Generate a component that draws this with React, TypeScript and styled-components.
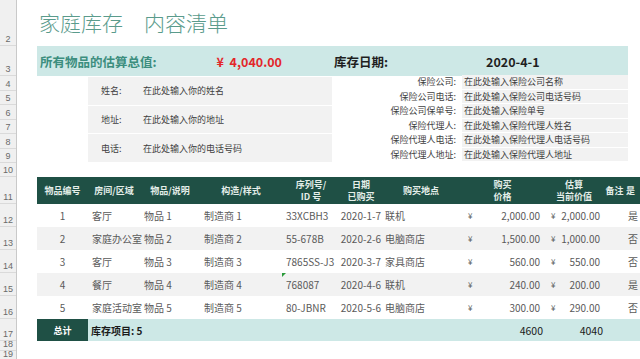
import React from 'react';
import styled, { createGlobalStyle } from 'styled-components';

const Global = createGlobalStyle`
  html, body { margin: 0; padding: 0; background: #ffffff; }
  body { width: 640px; height: 359px; overflow: hidden; font-family: "Noto Sans CJK SC", "Noto Sans", sans-serif; }
  * { box-sizing: border-box; }
`;

const DARK = '#1f5045';
const TEAL = '#cde8e6';
const GREY = '#f2f2f2';
const TEXT = '#5a5a5a';

const Sheet = styled.div`
  display: flex;
  width: 640px;
  height: 359px;
  overflow: hidden;
`;

const RowHeaders = styled.div`
  display: flex;
  flex-direction: column;
  width: 17px;
  flex: none;
  background: #f0f0f0;
  border-right: 1px solid #c9c9c9;
`;

const RowNum = styled.div<{ $h: number }>`
  height: ${(p) => p.$h}px;
  flex: none;
  display: flex;
  align-items: flex-end;
  justify-content: center;
  font-family: "Liberation Sans", sans-serif;
  font-size: 9px;
  line-height: 10px;
  color: #6a6a6a;
  border-bottom: 1px solid #dadada;
  padding-bottom: 1px;
`;

const Main = styled.div`
  flex: 1;
  display: flex;
  flex-direction: column;
  min-width: 0;
`;

const TitleBar = styled.div`
  height: 46px;
  flex: none;
  display: flex;
  align-items: center;
  padding-left: 22px;
  padding-bottom: 2px;
  gap: 21px;
  font-size: 21px;
  font-weight: 300;
  color: #5a9b8c;
`;

const SummaryBar = styled.div`
  height: 30px;
  flex: none;
  margin-left: 20px;
  width: 591px;
  background: ${TEAL};
  display: grid;
  grid-template-columns: 175px 70px 52px 152px 1fr;
  align-items: center;
  font-size: 12.5px;
  font-weight: 700;
`;

const SumLabel = styled.div<{ $color: string; $align?: string; $pad?: number }>`
  color: ${(p) => p.$color};
  text-align: ${(p) => p.$align || 'left'};
  padding-left: ${(p) => p.$pad ?? 0}px;
  white-space: nowrap;
`;

const InfoArea = styled.div`
  height: 101px;
  flex: none;
  padding: 1px 0 0 71px;
  display: flex;
`;

const InfoLeft = styled.div`
  width: 244px;
  height: 85px;
  display: grid;
  grid-template-columns: 52px 1fr;
  grid-auto-rows: 1fr;
  row-gap: 1px;
  background: #ffffff;
`;

const InfoCell = styled.div<{ $pad?: number }>`
  background: ${GREY};
  display: flex;
  align-items: center;
  padding-left: ${(p) => p.$pad ?? 0}px;
  font-size: 9px;
  color: #3f3f3f;
  white-space: nowrap;
`;

const InfoRight = styled.div`
  width: 296px;
  height: 86px;
  margin-top: -2px;
  display: grid;
  grid-template-columns: 130px 1fr;
  grid-auto-rows: 1fr;
  row-gap: 1px;
`;

const InsLabel = styled.div`
  display: flex;
  align-items: center;
  justify-content: flex-end;
  padding-right: 6px;
  font-size: 9px;
  color: #3f3f3f;
  white-space: nowrap;
`;

const InsValue = styled.div`
  background: ${GREY};
  display: flex;
  align-items: center;
  padding-left: 2px;
  font-size: 9px;
  color: #3f3f3f;
  white-space: nowrap;
`;

const COLS = '51px 52px 60px 82px 58px 42px 78px 85px 58px 23px 1fr';

const Table = styled.div`
  margin-left: 20px;
  display: flex;
  flex-direction: column;
`;

const HeadRow = styled.div`
  height: 27px;
  display: grid;
  grid-template-columns: ${COLS};
  background: ${DARK};
  color: #e4eee9;
  font-size: 9px;
  font-weight: 700;
  line-height: 12px;
`;

const HeadCell = styled.div<{ $align?: string }>`
  display: flex;
  flex-direction: column;
  justify-content: center;
  align-items: ${(p) => p.$align || 'center'};
  white-space: nowrap;
  overflow: hidden;
`;

const DataRow = styled.div<{ $shade: boolean }>`
  height: 23px;
  display: grid;
  grid-template-columns: ${COLS};
  background: ${(p) => (p.$shade ? GREY : '#ffffff')};
  font-size: 10px;
  color: ${TEXT};
  align-items: center;
`;

const Cell = styled.div<{ $align?: string; $pl?: number; $pr?: number }>`
  position: relative;
  height: 100%;
  display: flex;
  align-items: center;
  justify-content: ${(p) => (p.$align === 'right' ? 'flex-end' : p.$align === 'center' ? 'center' : 'flex-start')};
  padding-left: ${(p) => p.$pl ?? 0}px;
  padding-right: ${(p) => p.$pr ?? 0}px;
  white-space: nowrap;
  min-width: 0;
`;

const Money = styled.div<{ $pl: number; $pr: number }>`
  height: 100%;
  display: flex;
  align-items: center;
  justify-content: space-between;
  padding-left: ${(p) => p.$pl}px;
  padding-right: ${(p) => p.$pr}px;
  white-space: nowrap;
`;

const Yen = styled.span`
  font-size: 8px;
`;

const Marker = styled.span`
  position: absolute;
  left: 0;
  top: 0;
  width: 0;
  height: 0;
  border-top: 4px solid #2a9a3a;
  border-right: 4px solid transparent;
`;

const TotalRow = styled.div`
  height: 22px;
  display: grid;
  grid-template-columns: ${COLS};
  background: ${TEAL};
  font-size: 10px;
  color: #1a1a1a;
  align-items: center;
`;

const TotalHead = styled.div`
  height: 100%;
  background: ${DARK};
  color: #ffffff;
  font-weight: 700;
  display: flex;
  align-items: center;
  justify-content: center;
  font-size: 9px;
`;

const TotalCount = styled.div`
  grid-column: span 6;
  font-weight: 700;
  padding-left: 3px;
`;

const TotalNum = styled.div<{ $pr: number }>`
  text-align: right;
  padding-right: ${(p) => p.$pr}px;
  font-size: 10.5px;
`;

const rowHeights: [string, number][] = [
  ['2', 46], ['3', 30], ['4', 15], ['5', 14], ['6', 15], ['7', 14], ['8', 15], ['9', 14],
  ['10', 14], ['11', 27], ['12', 23], ['13', 23], ['14', 23], ['15', 23], ['16', 23],
  ['17', 22], ['18', 10], ['19', 10],
];

const items = [
  { id: 1, room: '客厅', item: '物品 1', maker: '制造商 1', sn: '33XCBH3', date: '2020-1-7', place: '联机', price: '2,000.00', value: '2,000.00', ins: '是' },
  { id: 2, room: '家庭办公室', item: '物品 2', maker: '制造商 2', sn: '55-678B', date: '2020-2-6', place: '电脑商店', price: '1,500.00', value: '1,000.00', ins: '否' },
  { id: 3, room: '客厅', item: '物品 3', maker: '制造商 3', sn: '7865SS-J3', date: '2020-3-7', place: '家具商店', price: '560.00', value: '550.00', ins: '否' },
  { id: 4, room: '餐厅', item: '物品 4', maker: '制造商 4', sn: '768087', date: '2020-4-6', place: '联机', price: '240.00', value: '200.00', ins: '是' },
  { id: 5, room: '家庭活动室', item: '物品 5', maker: '制造商 5', sn: '80-JBNR', date: '2020-5-6', place: '电脑商店', price: '300.00', value: '290.00', ins: '否' },
];

const personal = [
  ['姓名:', '在此处输入你的姓名'],
  ['地址:', '在此处输入你的地址'],
  ['电话:', '在此处输入你的电话号码'],
];

const insurance = [
  ['保险公司:', '在此处输入保险公司名称'],
  ['保险公司电话:', '在此处输入保险公司电话号码'],
  ['保险公司保单号:', '在此处输入保险单号'],
  ['保险代理人:', '在此处输入保险代理人姓名'],
  ['保险代理人电话:', '在此处输入保险代理人电话号码'],
  ['保险代理人地址:', '在此处输入保险代理人地址'],
];

export default function App() {
  return (
    <>
      <Global />
      <Sheet>
        <RowHeaders>
          {rowHeights.map(([n, h]) => (
            <RowNum key={n} $h={h}>{n}</RowNum>
          ))}
        </RowHeaders>
        <Main>
          <TitleBar>
            <span>家庭库存</span>
            <span>内容清单</span>
          </TitleBar>
          <SummaryBar>
            <SumLabel $color="#3c8e7e" $pad={3}>所有物品的估算总值:</SumLabel>
            <SumLabel $color="#e3262a" $align="right">¥&nbsp; 4,040.00</SumLabel>
            <span />
            <SumLabel $color="#1f1f1f">库存日期:</SumLabel>
            <SumLabel $color="#1f1f1f">2020-4-1</SumLabel>
          </SummaryBar>
          <InfoArea>
            <InfoLeft>
              {personal.map(([l, v]) => (
                <React.Fragment key={l}>
                  <InfoCell $pad={13}>{l}</InfoCell>
                  <InfoCell $pad={3}>{v}</InfoCell>
                </React.Fragment>
              ))}
            </InfoLeft>
            <InfoRight>
              {insurance.map(([l, v]) => (
                <React.Fragment key={l}>
                  <InsLabel>{l}</InsLabel>
                  <InsValue>{v}</InsValue>
                </React.Fragment>
              ))}
            </InfoRight>
          </InfoArea>
          <Table>
            <HeadRow>
              <HeadCell>物品编号</HeadCell>
              <HeadCell>房间/区域</HeadCell>
              <HeadCell>物品/说明</HeadCell>
              <HeadCell>构造/样式</HeadCell>
              <HeadCell><span>序列号/</span><span>ID 号</span></HeadCell>
              <HeadCell><span>日期</span><span>已购买</span></HeadCell>
              <HeadCell>购买地点</HeadCell>
              <HeadCell><span>购买</span><span>价格</span></HeadCell>
              <HeadCell><span>估算</span><span>当前价值</span></HeadCell>
              <HeadCell>备注</HeadCell>
              <HeadCell $align="flex-start">是</HeadCell>
            </HeadRow>
            {items.map((it, i) => (
              <DataRow key={it.id} $shade={i % 2 === 1}>
                <Cell $align="center">{it.id}</Cell>
                <Cell $pl={4}>{it.room}</Cell>
                <Cell $pl={4}>{it.item}</Cell>
                <Cell $pl={4}>{it.maker}</Cell>
                <Cell $pl={4}>
                  {it.id === 4 && <Marker />}
                  {it.sn}
                </Cell>
                <Cell $align="right" $pr={1}>{it.date}</Cell>
                <Cell $pl={3}>{it.place}</Cell>
                <Money $pl={8} $pr={5}><Yen>¥</Yen><span>{it.price}</span></Money>
                <Money $pl={6} $pr={3}><Yen>¥</Yen><span>{it.value}</span></Money>
                <Cell />
                <Cell $pl={2}>{it.ins}</Cell>
              </DataRow>
            ))}
            <TotalRow>
              <TotalHead>总计</TotalHead>
              <TotalCount>库存项目: 5</TotalCount>
              <TotalNum $pr={2}>4600</TotalNum>
              <TotalNum $pr={0}>4040</TotalNum>
            </TotalRow>
          </Table>
        </Main>
      </Sheet>
    </>
  );
}
